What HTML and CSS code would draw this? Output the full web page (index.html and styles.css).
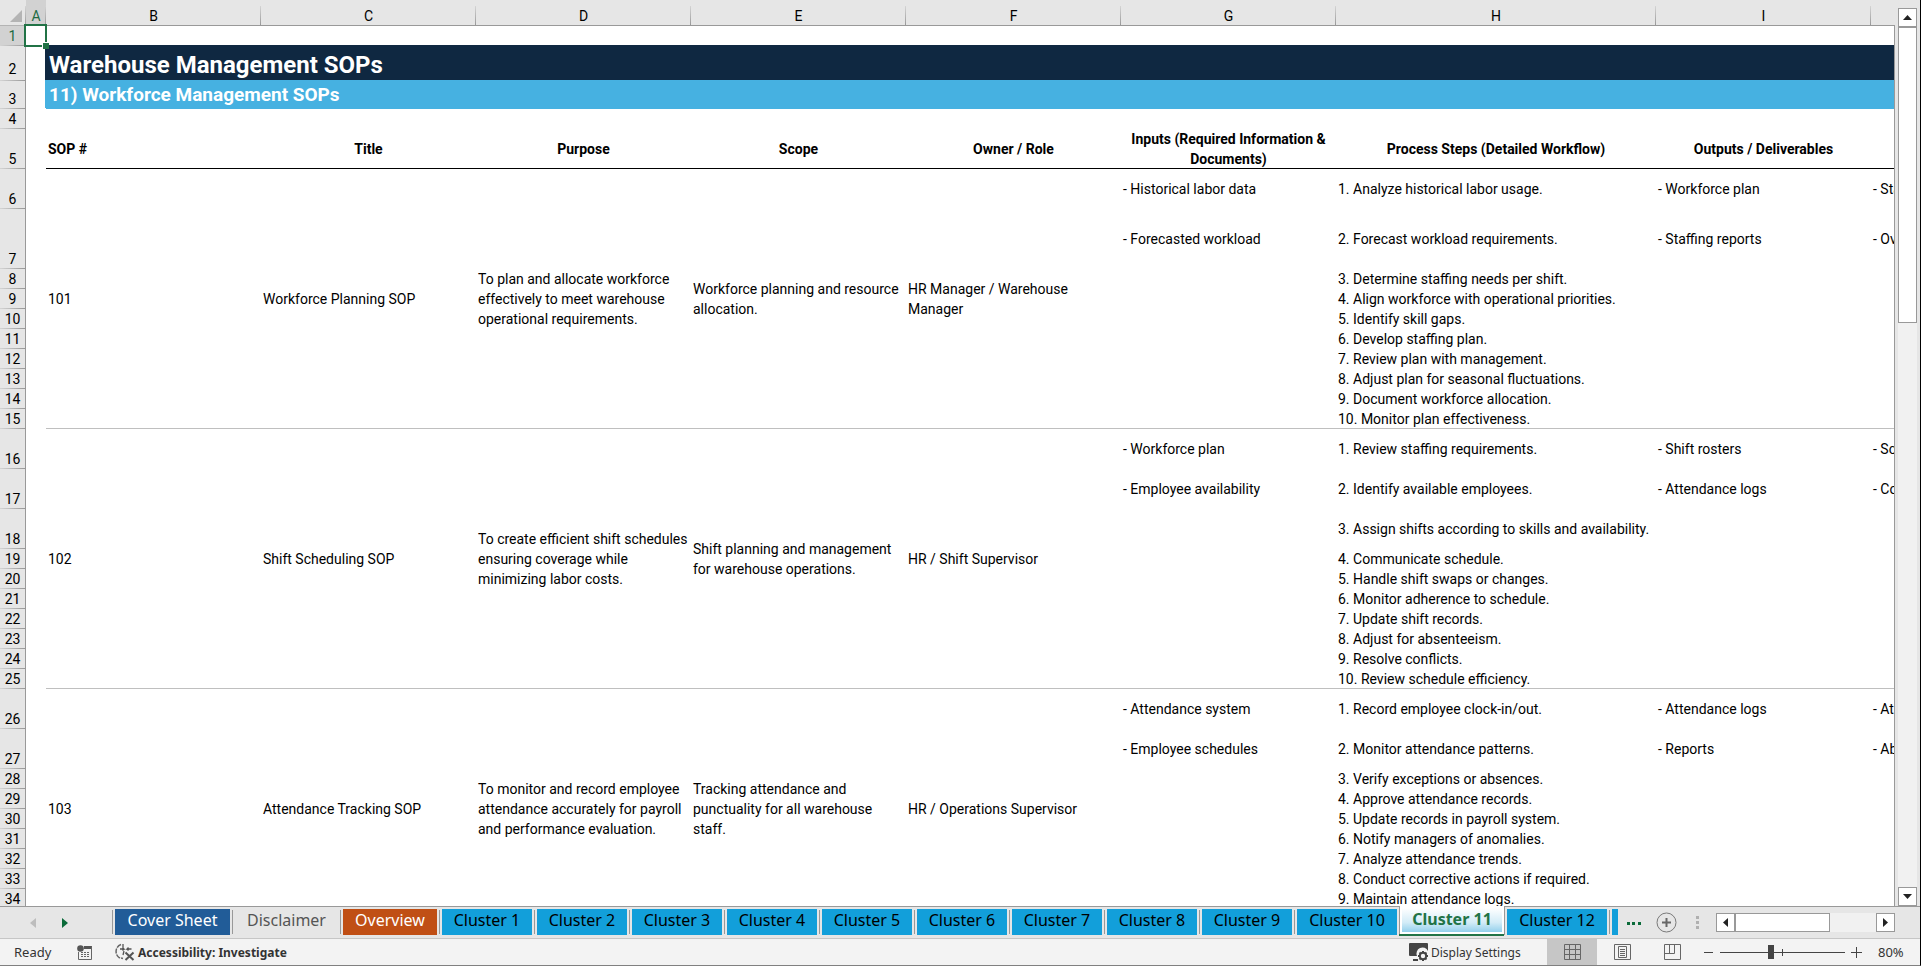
FILE: index.html
```html
<!DOCTYPE html>
<html lang="en">
<head>
<meta charset="utf-8">
<title>Warehouse Management SOPs</title>
<link rel="stylesheet" href="styles.css">
</head>

<body>

<div id="workspace">

	<div id="sheet">
	<table id="grid">
	<colgroup>
		<col class="col-num"><col class="col-a"><col class="col-std"><col class="col-std"><col class="col-std"><col class="col-std"><col class="col-std"><col class="col-std"><col class="col-wide"><col class="col-std"><col class="col-std">
	</colgroup>
	<thead>
	<tr class="letters">
		<th class="corner"><svg width="12" height="12" viewBox="0 0 12 12"><path d="M12 0V12H0Z" fill="#b4b4b4"/></svg></th>
		<th class="selected">A</th><th>B</th><th>C</th><th>D</th><th>E</th><th>F</th><th>G</th><th>H</th><th>I</th><th></th>
	</tr>
	</thead>
	<tbody>
	<tr class="h20"><th class="selected">1</th><td class="active-cell"><span class="cursor"></span></td><td colspan="9"></td></tr>
	<tr class="h35"><th>2</th><td></td><td colspan="9" class="banner title">Warehouse Management SOPs</td></tr>
	<tr class="h28"><th>3</th><td></td><td colspan="9" class="banner subtitle">11) Workforce Management SOPs</td></tr>
	<tr class="h20"><th>4</th><td></td><td colspan="9"></td></tr>
	<tr class="h40 heads"><th>5</th><td></td><td class="left">SOP #</td><td>Title</td><td>Purpose</td><td>Scope</td><td>Owner / Role</td><td>Inputs (Required Information &amp; Documents)</td><td>Process Steps (Detailed Workflow)</td><td>Outputs / Deliverables</td><td></td></tr>

	<tr class="h40"><th>6</th><td></td>
		<td rowspan="10" class="end">101</td>
		<td rowspan="10" class="end">Workforce Planning SOP</td>
		<td rowspan="10" class="end">To plan and allocate workforce<br>effectively to meet warehouse<br>operational requirements.</td>
		<td rowspan="10" class="end">Workforce planning and resource<br>allocation.</td>
		<td rowspan="10" class="end">HR Manager / Warehouse<br>Manager</td>
		<td>- Historical labor data</td><td>1. Analyze historical labor usage.</td><td>- Workforce plan</td><td>- Sta</td></tr>
	<tr class="h60"><th>7</th><td></td><td>- Forecasted workload</td><td>2. Forecast workload requirements.</td><td>- Staffing reports</td><td>- Ov</td></tr>
	<tr class="h20"><th>8</th><td></td><td></td><td>3. Determine staffing needs per shift.</td><td></td><td></td></tr>
	<tr class="h20"><th>9</th><td></td><td></td><td>4. Align workforce with operational priorities.</td><td></td><td></td></tr>
	<tr class="h20"><th>10</th><td></td><td></td><td>5. Identify skill gaps.</td><td></td><td></td></tr>
	<tr class="h20"><th>11</th><td></td><td></td><td>6. Develop staffing plan.</td><td></td><td></td></tr>
	<tr class="h20"><th>12</th><td></td><td></td><td>7. Review plan with management.</td><td></td><td></td></tr>
	<tr class="h20"><th>13</th><td></td><td></td><td>8. Adjust plan for seasonal fluctuations.</td><td></td><td></td></tr>
	<tr class="h20"><th>14</th><td></td><td></td><td>9. Document workforce allocation.</td><td></td><td></td></tr>
	<tr class="h20"><th>15</th><td></td><td class="end"></td><td class="end">10. Monitor plan effectiveness.</td><td class="end"></td><td class="end"></td></tr>

	<tr class="h40"><th>16</th><td></td>
		<td rowspan="10" class="end">102</td>
		<td rowspan="10" class="end">Shift Scheduling SOP</td>
		<td rowspan="10" class="end">To create efficient shift schedules<br>ensuring coverage while<br>minimizing labor costs.</td>
		<td rowspan="10" class="end">Shift planning and management<br>for warehouse operations.</td>
		<td rowspan="10" class="end">HR / Shift Supervisor</td>
		<td>- Workforce plan</td><td>1. Review staffing requirements.</td><td>- Shift rosters</td><td>- Sc</td></tr>
	<tr class="h40"><th>17</th><td></td><td>- Employee availability</td><td>2. Identify available employees.</td><td>- Attendance logs</td><td>- Co</td></tr>
	<tr class="h40"><th>18</th><td></td><td></td><td>3. Assign shifts according to skills and availability.</td><td></td><td></td></tr>
	<tr class="h20"><th>19</th><td></td><td></td><td>4. Communicate schedule.</td><td></td><td></td></tr>
	<tr class="h20"><th>20</th><td></td><td></td><td>5. Handle shift swaps or changes.</td><td></td><td></td></tr>
	<tr class="h20"><th>21</th><td></td><td></td><td>6. Monitor adherence to schedule.</td><td></td><td></td></tr>
	<tr class="h20"><th>22</th><td></td><td></td><td>7. Update shift records.</td><td></td><td></td></tr>
	<tr class="h20"><th>23</th><td></td><td></td><td>8. Adjust for absenteeism.</td><td></td><td></td></tr>
	<tr class="h20"><th>24</th><td></td><td></td><td>9. Resolve conflicts.</td><td></td><td></td></tr>
	<tr class="h20"><th>25</th><td></td><td class="end"></td><td class="end">10. Review schedule efficiency.</td><td class="end"></td><td class="end"></td></tr>

	<tr class="h40"><th>26</th><td></td>
		<td rowspan="10">103</td>
		<td rowspan="10">Attendance Tracking SOP</td>
		<td rowspan="10">To monitor and record employee<br>attendance accurately for payroll<br>and performance evaluation.</td>
		<td rowspan="10">Tracking attendance and<br>punctuality for all warehouse<br>staff.</td>
		<td rowspan="10">HR / Operations Supervisor</td>
		<td>- Attendance system</td><td>1. Record employee clock-in/out.</td><td>- Attendance logs</td><td>- At</td></tr>
	<tr class="h40"><th>27</th><td></td><td>- Employee schedules</td><td>2. Monitor attendance patterns.</td><td>- Reports</td><td>- Ab</td></tr>
	<tr class="h20"><th>28</th><td></td><td></td><td>3. Verify exceptions or absences.</td><td></td><td></td></tr>
	<tr class="h20"><th>29</th><td></td><td></td><td>4. Approve attendance records.</td><td></td><td></td></tr>
	<tr class="h20"><th>30</th><td></td><td></td><td>5. Update records in payroll system.</td><td></td><td></td></tr>
	<tr class="h20"><th>31</th><td></td><td></td><td>6. Notify managers of anomalies.</td><td></td><td></td></tr>
	<tr class="h20"><th>32</th><td></td><td></td><td>7. Analyze attendance trends.</td><td></td><td></td></tr>
	<tr class="h20"><th>33</th><td></td><td></td><td>8. Conduct corrective actions if required.</td><td></td><td></td></tr>
	<tr class="h20"><th>34</th><td></td><td></td><td>9. Maintain attendance logs.</td><td></td><td></td></tr>
	<tr class="h20"><th></th><td></td><td></td><td></td><td></td><td></td></tr>
	</tbody>
	</table>
	</div> <!-- ends div#sheet -->

	<div id="edge"></div>

	<div id="vscroll">
		<button type="button" class="arrow" aria-label="Scroll up"><svg width="9" height="5" viewBox="0 0 9 5"><path d="M4.500 0L9 5H0Z" fill="#222"/></svg></button>
		<div class="vthumb"></div>
		<div class="vtrack"></div>
		<button type="button" class="arrow" aria-label="Scroll down"><svg width="9" height="5" viewBox="0 0 9 5"><path d="M0 0H9L4.500 5Z" fill="#222"/></svg></button>
	</div>

</div> <!-- ends div#workspace -->

<div id="tabbar">
	<div class="tabnav">
		<button type="button" aria-label="Previous sheet"><svg width="6" height="10" viewBox="0 0 6 10"><path d="M6 0V10L0 5Z" fill="#bdbdbd"/></svg></button>
		<button type="button" aria-label="Next sheet"><svg width="6" height="10" viewBox="0 0 6 10"><path d="M0 0L6 5L0 10Z" fill="#0b6b3a"/></svg></button>
	</div>
	<ul class="tabs">
		<li><button type="button" class="tab cover">Cover Sheet</button></li>
		<li><button type="button" class="tab plain">Disclaimer</button></li>
		<li><button type="button" class="tab overview">Overview</button></li>
		<li><button type="button" class="tab">Cluster 1</button></li>
		<li><button type="button" class="tab">Cluster 2</button></li>
		<li><button type="button" class="tab">Cluster 3</button></li>
		<li><button type="button" class="tab">Cluster 4</button></li>
		<li><button type="button" class="tab">Cluster 5</button></li>
		<li><button type="button" class="tab">Cluster 6</button></li>
		<li><button type="button" class="tab">Cluster 7</button></li>
		<li><button type="button" class="tab">Cluster 8</button></li>
		<li><button type="button" class="tab">Cluster 9</button></li>
		<li><button type="button" class="tab long">Cluster 10</button></li>
		<li class="current"><button type="button" class="tab long">Cluster 11</button></li>
		<li class="after"><button type="button" class="tab long">Cluster 12</button></li>
		<li><button type="button" class="tab sliver" aria-label="Next cluster"></button></li>
	</ul>
	<button type="button" class="more" aria-label="More sheets"><svg width="14" height="4" viewBox="0 0 14 4"><path d="M0 1H3V4H0ZM5 1H8V4H5ZM11 1H14V4H11Z" fill="#0b6b3a"/></svg></button>
	<button type="button" class="add" aria-label="New sheet"><svg width="21" height="21" viewBox="0 0 21 21"><circle cx="10.500" cy="10.500" r="9.500" fill="none" stroke="#7a7a7a"/><path d="M10.500 6V15M6 10.500H15" stroke="#666" stroke-width="2"/></svg></button>
	<svg class="grip" width="3" height="13" viewBox="0 0 3 13"><path d="M0 0H3V3H0ZM0 5H3V8H0ZM0 10H3V13H0Z" fill="#b0b0b0"/></svg>
	<div id="hscroll">
		<button type="button" class="arrow" aria-label="Scroll left"><svg width="5" height="9" viewBox="0 0 5 9"><path d="M5 0V9L0 4.500Z" fill="#222"/></svg></button>
		<div class="hthumb"></div>
		<div class="htrack"></div>
		<button type="button" class="arrow" aria-label="Scroll right"><svg width="5" height="9" viewBox="0 0 5 9"><path d="M0 0L5 4.500L0 9Z" fill="#222"/></svg></button>
	</div>
</div> <!-- ends div#tabbar -->

<div id="status">
	<span class="ready">Ready</span>
	<button type="button" class="macro" aria-label="Record macro"><svg width="15" height="15" viewBox="0 0 15 15"><path d="M7 1H15V4H7Z" fill="#555"/><path d="M1.500 7V14.500H14.500V1.500" fill="none" stroke="#666"/><circle cx="3.500" cy="3.500" r="3.300" fill="#555"/><path d="M4 7.500H6M7 7.500H9M10 7.500H12M4 9.500H6M7 9.500H9M10 9.500H12M4 11.500H6M7 11.500H9M10 11.500H12" stroke="#666"/></svg></button>
	<button type="button" class="access"><svg width="20" height="18" viewBox="0 0 20 18"><path d="M6 1.500A7.500 7.500 0 0 0 4 14.500L8 15.500" fill="none" stroke="#666" stroke-width="1.500" stroke-dasharray="5 1"/><path d="M8 1V5.500M5 6H9L7.500 4.500M9 6L7.500 7.500M16.500 6H12L13.500 4.500M12 6L13.500 7.500M9 8L8 12" fill="none" stroke="#555" stroke-width="1.300"/><path d="M10.500 9.500L18.500 17M18.500 9.500L10.500 17" stroke="#555" stroke-width="2"/></svg>Accessibility: Investigate</button>

	<button type="button" class="display"><svg width="20" height="18" viewBox="0 0 20 18"><path d="M1 0H18Q19 0 19 1V8A6 6 0 0 0 8 13H1Q0 13 0 12V1Q0 0 1 0ZM4 16H9V18H4Z" fill="#444"/><circle cx="14" cy="13" r="3.200" fill="none" stroke="#444" stroke-width="2"/><path d="M14 8V9.500M14 16.500V18M9 13H10.500M17.500 13H19M10.500 9.500L11.600 10.600M16.400 15.400L17.500 16.500M17.500 9.500L16.400 10.600M11.600 15.400L10.500 16.500" stroke="#444" stroke-width="2"/></svg>Display Settings</button>
	<div class="views">
		<button type="button" class="on" aria-label="Normal view"><svg width="17" height="16" viewBox="0 0 17 16"><path d="M.5 .5H16.500V15.500H.5ZM.5 5.500H16.500M.5 10.500H16.500M5.500 .5V15.500M11.500 .5V15.500" fill="none" stroke="#666"/></svg></button>
		<button type="button" aria-label="Page layout view"><svg width="17" height="16" viewBox="0 0 17 16"><path d="M.5 .5H16.500V15.500H.5ZM4.500 2.500H12.500V13.500H4.500ZM6 5.500H11M6 7.500H11M6 9.500H11M6 11.500H11" fill="none" stroke="#666"/></svg></button>
		<button type="button" aria-label="Page break preview"><svg width="17" height="16" viewBox="0 0 17 16"><path d="M.5 .5H16.500V15.500H.5ZM.5 9.500H10.500V.5M5.500 .5V9.500" fill="none" stroke="#666"/></svg></button>
	</div>
	<button type="button" class="step" aria-label="Zoom out"><svg width="11" height="11" viewBox="0 0 11 11"><path d="M1 5.500H10" stroke="#444"/></svg></button>
	<input type="range" class="zoom" aria-label="Zoom" min="0" max="100" value="40">
	<button type="button" class="step" aria-label="Zoom in"><svg width="11" height="11" viewBox="0 0 11 11"><path d="M0 5.500H11M5.500 0V11" stroke="#444"/></svg></button>
	<span class="percent">80%</span>
</div> <!-- ends div#status -->

</body>
</html>
```
FILE: styles.css
```css
*{
	box-sizing: border-box;
}

body{
	margin: 0;
	height: 100vh;
	display: flex;
	flex-direction: column;
	overflow: hidden;
	background: #e6e6e6;
	border-right: 1px solid black;
	border-bottom: 1px solid #808080;
	font-family: Roboto, "Liberation Sans", sans-serif;
	font-size: 14px;
	color: black;
}

button{
	border: 0;
	padding: 0;
	background: none;
	font: inherit;
	color: inherit;
}

svg{
	display: block;
	flex: none;
}

#workspace{
	flex: 1;
	min-height: 0;
	display: flex;
}

#sheet{
	flex: 1;
	min-width: 0;
	overflow: hidden;
}

#edge{
	width: 1px;
	margin-top: 25px;
	background: #999;
}

/* the grid */

#grid{
	table-layout: fixed;
	width: 2086px;
	border-spacing: 0;
	background: white;
}

.col-num{ width: 26px; }
.col-a{ width: 20px; }
.col-std{ width: 215px; }
.col-wide{ width: 320px; }

.h20{ height: 20px; }
.h28{ height: 28px; }
.h35{ height: 35px; }
.h40{ height: 40px; }
.h60{ height: 60px; }

#grid td{
	padding: 0 2px;
	line-height: 20px;
	vertical-align: middle;
	white-space: nowrap;
}

#grid th{
	padding: 0;
	font-weight: normal;
	line-height: 20px;
	vertical-align: bottom;
	background: linear-gradient(to right, #d4d4d4, #999) bottom / 100% 1px no-repeat #e6e6e6;
	border-right: 1px solid #999;
}

#grid .h35 th{
	padding-bottom: 2px;
}

#grid .letters th{
	height: 26px;
	line-height: 18px;
	border-right: 0;
	border-bottom: 1px solid #999;
	background: linear-gradient(to bottom, #d4d4d4, #999) right bottom / 1px 19px no-repeat #e6e6e6;
}

#grid .letters .corner{
	padding: 0 3px 3px 10px;
	border-bottom-color: #b4b4b4;
}

#grid th.selected{
	background-color: #d2d2d2;
	color: #1e6b42;
}

#grid .banner{
	padding: 0 3px;
	color: white;
	font-weight: bold;
}

#grid .title{
	padding-top: 2px;
	background: #0f2841;
	box-shadow: -1px -1px 0 #0f2841;
	font-size: 24px;
	line-height: 32px;
}

#grid .subtitle{
	background: #46b1e1;
	box-shadow: -1px -1px 0 #46b1e1;
	font-size: 19px;
	line-height: 28px;
}

#grid .heads td{
	font-weight: bold;
	text-align: center;
	white-space: normal;
	box-shadow: inset 0 -1px 0 black;
}

#grid .heads td.left{
	text-align: left;
}

#grid .heads th + td{
	box-shadow: none;
}

#grid td.end{
	box-shadow: inset 0 -1px 0 #bfbfbf;
}

#grid td.active-cell{
	position: relative;
}

.cursor{
	position: absolute;
	inset: -2px -1px -1px -2px;
	border: 2px solid #217346;
}

.cursor::after{
	content: "";
	position: absolute;
	right: -4px;
	bottom: -4px;
	width: 6px;
	height: 6px;
	background: #217346;
	border-top: 1px solid white;
	border-left: 1px solid white;
}

/* scroll bars */

#vscroll{
	width: 25px;
	padding: 8px 3px 0;
	display: flex;
	flex-direction: column;
}

.arrow{
	flex: none;
	width: 19px;
	height: 19px;
	display: flex;
	align-items: center;
	justify-content: center;
	background: white;
	border: 1px solid #999;
}

.vthumb{
	flex: 35;
	background: white;
	border: 1px solid #999;
}

.vtrack{
	flex: 67;
	background: #f1f1f1;
}

#hscroll{
	width: 179px;
	display: flex;
}

.hthumb{
	flex: 2;
	background: white;
	border: 1px solid #999;
}

.htrack{
	flex: 1;
	background: #f1f1f1;
}

/* sheet tabs */

#tabbar{
	flex: none;
	height: 32px;
	padding-right: 25px;
	display: flex;
	align-items: center;
	border-top: 1px solid #999;
	font-family: "Noto Sans", "Open Sans", sans-serif;
	font-size: 16px;
}

.tabnav{
	width: 112px;
	padding-left: 30px;
	display: flex;
	gap: 26px;
}

.tabs{
	align-self: stretch;
	margin: 0;
	padding: 0;
	display: flex;
	list-style: none;
}

.tabs li{
	padding: 2px 2px 3px 3px;
	background: linear-gradient(#999, #999) left 3px / 1px 24px no-repeat;
}

.tab{
	width: 90px;
	height: 26px;
	padding-bottom: 4px;
	background: #129fda;
	line-height: 22px;
	white-space: nowrap;
}

.cover{
	width: 115px;
	background: #215c98;
	color: white;
}

.plain{
	width: 103px;
	background: none;
	color: #555;
}

.overview{
	width: 94px;
	background: #c04f15;
	color: white;
}

.long{
	width: 100px;
}

.sliver{
	width: 6px;
}

.tabs .current{
	height: 30px;
	margin-top: -1px;
	background: white;
	border-bottom: 2px solid #217346;
	box-shadow: inset 1px 0 0 #999;
}

.current .tab{
	height: 24px;
	padding-bottom: 2px;
	background: linear-gradient(white, #d3ecf7 60%, #93d0ec);
	color: #217346;
	font-weight: bold;
}

.tabs .after{
	background: linear-gradient(#999, #999) left top / 1px 28px no-repeat;
}

.more{
	margin-left: 7px;
}

.add{
	margin-left: 15px;
}

.grip{
	margin-left: 19px;
	margin-right: auto;
}

/* status bar */

#status{
	flex: none;
	height: 27px;
	padding-left: 14px;
	display: flex;
	align-items: center;
	background: #f3f3f3;
	border-top: 1px solid #c6c6c6;
	font-family: "Noto Sans", "Open Sans", sans-serif;
	font-size: 13px;
	color: #333;
}

.ready{
	width: 63px;
}

.access{
	margin-left: 23px;
	margin-right: auto;
	display: flex;
	align-items: center;
	gap: 3px;
	font-weight: bold;
	font-size: 12px;
}

.display{
	width: 138px;
	display: flex;
	align-items: center;
	gap: 2px;
	font-size: 12px;
}

.views{
	align-self: stretch;
	display: flex;
}

.views button{
	width: 50px;
	display: flex;
	align-items: center;
	justify-content: center;
}

.views .on{
	background: #c6c6c6;
}

.step{
	margin: 0 6px;
}

.zoom{
	appearance: none;
	width: 125px;
	height: 14px;
	margin: 0;
	background:
		linear-gradient(#444, #444) center / 1px 7px no-repeat,
		linear-gradient(#444, #444) center / 100% 1px no-repeat;
}

.zoom::-webkit-slider-thumb{
	appearance: none;
	width: 6px;
	height: 14px;
	background: #444;
}

.percent{
	width: 52px;
	padding-left: 10px;
}
```
